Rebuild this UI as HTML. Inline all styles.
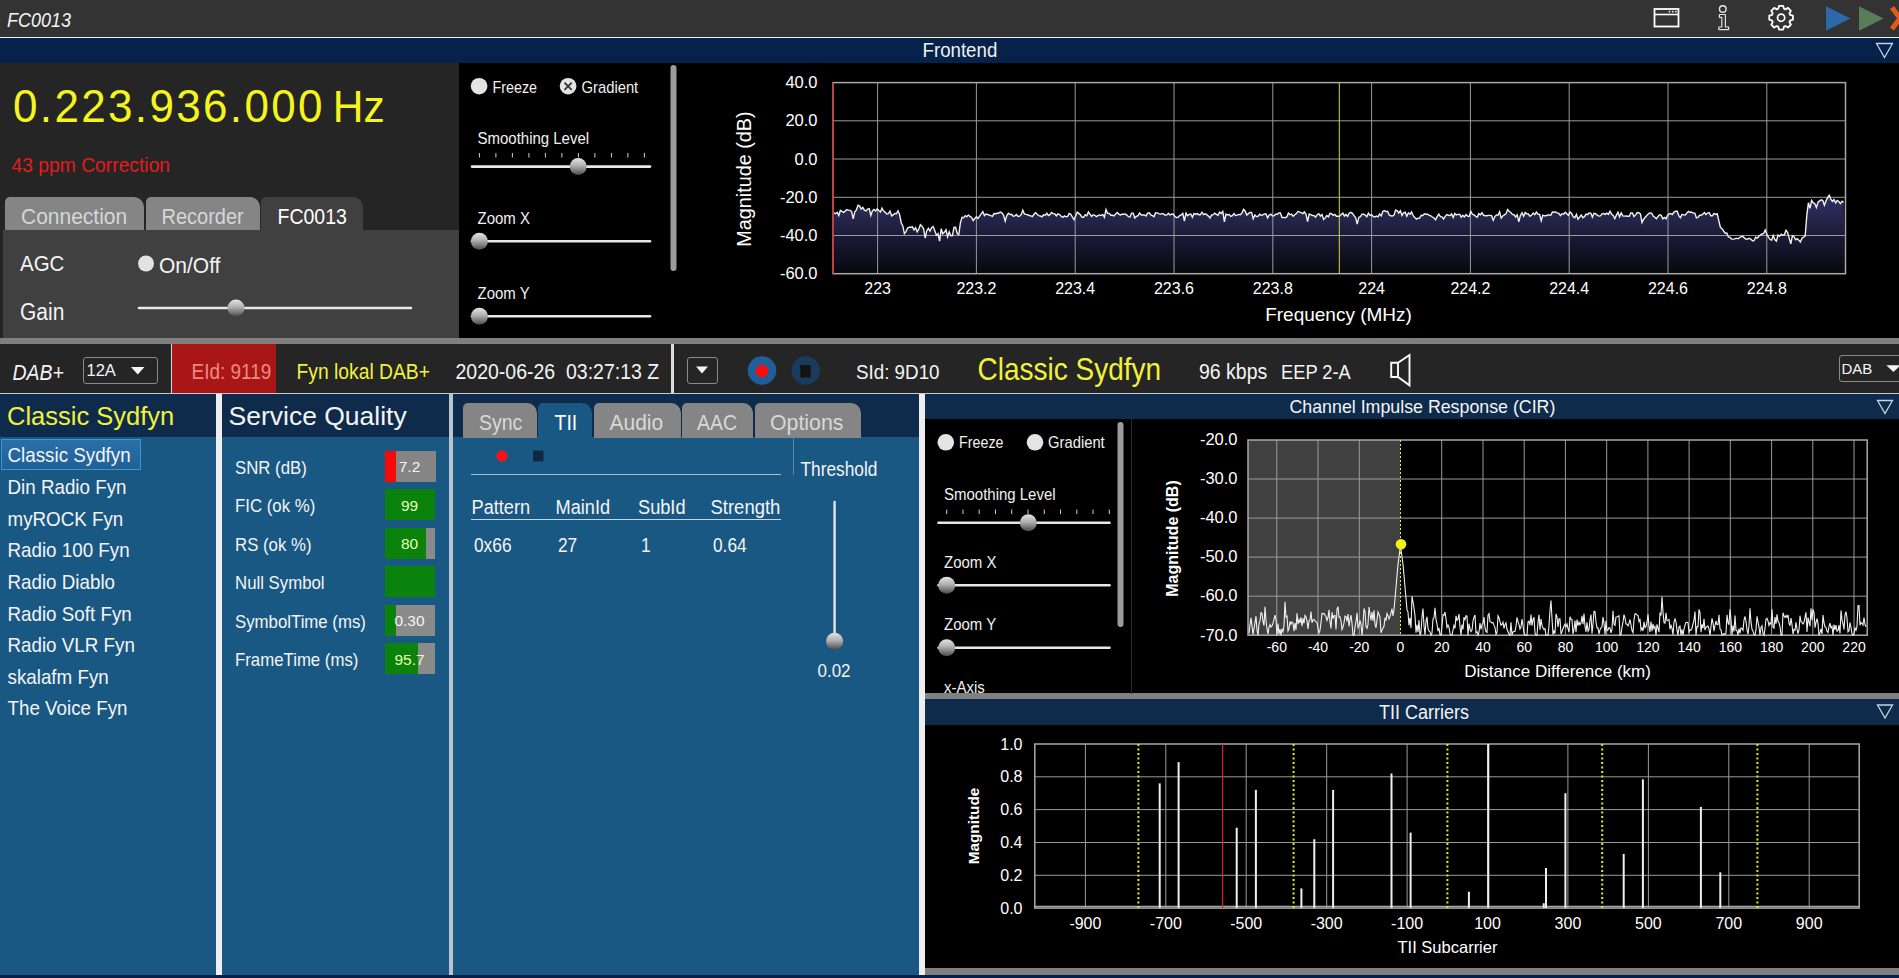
<!DOCTYPE html><html><head><meta charset="utf-8"><style>
*{margin:0;padding:0;box-sizing:border-box}
html,body{width:1899px;height:978px;overflow:hidden;background:#000;font-family:"Liberation Sans",sans-serif;color:#fff}
.a{position:absolute}
.t{position:absolute;white-space:nowrap;line-height:1}
svg{position:absolute;left:0;top:0}
</style></head><body><div class="a" style="left:0px;top:0px;width:1899px;height:37px;background:#333333;"></div>
<div class="a" style="left:0px;top:37px;width:1899px;height:1px;background:#eef2ee;"></div>
<div class="a" style="left:0px;top:38px;width:1899px;height:25px;background:#06214a;"></div>
<div class="a" style="left:0px;top:63px;width:459px;height:275px;background:#252525;"></div>
<div class="a" style="left:459px;top:63px;width:1440px;height:275px;background:#000;"></div>
<div class="a" style="left:3px;top:230px;width:456px;height:108px;background:#404040;"></div>
<div class="a" style="left:5px;top:197px;width:138.5px;height:33px;background:#858585;border-radius:5px 10px 0 0"></div>
<div class="a" style="left:145.5px;top:197px;width:114.5px;height:33px;background:#858585;border-radius:5px 10px 0 0"></div>
<div class="a" style="left:261px;top:197px;width:101.5px;height:33.5px;background:#404040;border-radius:5px 10px 0 0"></div>
<div class="a" style="left:0px;top:338px;width:1899px;height:6px;background:#808080;"></div>
<div class="a" style="left:0px;top:344px;width:1899px;height:49px;background:#252525;"></div>
<div class="a" style="left:0px;top:393px;width:1899px;height:1px;background:#c8ccd0;"></div>
<div class="a" style="left:83px;top:357px;width:75px;height:27px;border:1px solid #8a8a8a;border-radius:3px"></div>
<div class="a" style="left:172px;top:344px;width:104px;height:49px;background:#a81616;"></div>
<div class="a" style="left:171px;top:344px;width:1px;height:49px;background:#d8d8d8;"></div>
<div class="a" style="left:671px;top:344px;width:3px;height:49px;background:#dcdcdc;"></div>
<div class="a" style="left:687px;top:357px;width:31px;height:27px;border:1px solid #8a8a8a;border-radius:3px"></div>
<div class="a" style="left:1839px;top:355px;width:80px;height:27px;border:1px solid #8a8a8a;border-radius:3px"></div>
<div class="a" style="left:0px;top:394px;width:216px;height:584px;background:#1a5884;"></div>
<div class="a" style="left:0px;top:394px;width:216px;height:43px;background:#0f2b4c;"></div>
<div class="a" style="left:216px;top:394px;width:6px;height:581px;background:#eeeeee;"></div>
<div class="a" style="left:222px;top:394px;width:227px;height:584px;background:#1a5884;"></div>
<div class="a" style="left:222px;top:394px;width:227px;height:43px;background:#0f2b4c;"></div>
<div class="a" style="left:449px;top:394px;width:4px;height:581px;background:#b8c4d0;"></div>
<div class="a" style="left:453px;top:394px;width:466px;height:584px;background:#1a5884;"></div>
<div class="a" style="left:453px;top:394px;width:466px;height:43px;background:#0f2b4c;"></div>
<div class="a" style="left:919px;top:394px;width:6px;height:581px;background:#eeeeee;"></div>
<div class="a" style="left:0px;top:975px;width:1899px;height:3px;background:#062048;"></div>
<div class="a" style="left:1px;top:439px;width:140px;height:31px;border:1px solid #3f95cc;background:linear-gradient(#2a70a8,#1f6097)"></div>
<div class="a" style="left:384.5px;top:450.8px;width:11px;height:31px;background:#f80808;"></div>
<div class="a" style="left:395.5px;top:450.8px;width:40px;height:31px;background:#858585;"></div>
<div class="a" style="left:384.5px;top:489.3px;width:50px;height:31px;background:#0b820b;"></div>
<div class="a" style="left:384.5px;top:527.8px;width:41px;height:31px;background:#0b820b;"></div>
<div class="a" style="left:425.5px;top:527.8px;width:9px;height:31px;background:#8a8a8a;"></div>
<div class="a" style="left:384.5px;top:566.3px;width:50px;height:31px;background:#0b820b;"></div>
<div class="a" style="left:384.5px;top:604.8px;width:11px;height:31px;background:#0b820b;"></div>
<div class="a" style="left:395.5px;top:604.8px;width:39px;height:31px;background:#8a8a8a;"></div>
<div class="a" style="left:384.5px;top:643.3px;width:33px;height:31px;background:#0b820b;"></div>
<div class="a" style="left:417.5px;top:643.3px;width:17px;height:31px;background:#8a8a8a;"></div>
<div class="a" style="left:463px;top:402.5px;width:74px;height:35.0px;background:#858585;border-radius:5px 10px 0 0"></div>
<div class="a" style="left:538px;top:402.5px;width:54px;height:35.0px;background:#1a5884;border-radius:5px 10px 0 0"></div>
<div class="a" style="left:593.5px;top:402.5px;width:87.0px;height:35.0px;background:#858585;border-radius:5px 10px 0 0"></div>
<div class="a" style="left:681.5px;top:402.5px;width:71.5px;height:35.0px;background:#858585;border-radius:5px 10px 0 0"></div>
<div class="a" style="left:754.5px;top:402.5px;width:106.0px;height:35.0px;background:#858585;border-radius:5px 10px 0 0"></div>
<div class="a" style="left:471px;top:474px;width:310px;height:1px;background:#a8bccc;"></div>
<div class="a" style="left:793px;top:437px;width:1px;height:38px;background:#5a86a8;"></div>
<div class="a" style="left:471px;top:519px;width:310px;height:1px;background:#c8d4e0;"></div>
<div class="a" style="left:925px;top:394px;width:974px;height:25px;background:#0f2b4c;"></div>
<div class="a" style="left:925px;top:419px;width:974px;height:275px;background:#000;"></div>
<div class="a" style="left:925px;top:693px;width:974px;height:5.5px;background:#808080;"></div>
<div class="a" style="left:925px;top:693px;width:974px;height:5.5px;background:#808080;"></div>
<div class="a" style="left:1131px;top:419px;width:1px;height:275px;background:#2a2a2a;"></div>
<div class="a" style="left:925px;top:698.5px;width:974px;height:26px;background:#0f2b4c;"></div>
<div class="a" style="left:925px;top:724.5px;width:974px;height:243.5px;background:#000;"></div>
<div class="a" style="left:925px;top:968px;width:974px;height:7px;background:#808080;"></div><svg width="1899" height="978" viewBox="0 0 1899 978" font-family="Liberation Sans, sans-serif"><text transform="translate(7,26.5) scale(1,1.12)" font-size="18" fill="#f4f4f4" style="font-style:italic">FC0013</text>
<rect x="1654.5" y="9" width="24" height="17.5" fill="none" stroke="#fff" stroke-width="1.8"/>
<line x1="1654.5" y1="14.5" x2="1678.5" y2="14.5" stroke="#fff" stroke-width="1.6"/>
<circle cx="1669.5" cy="11.6" r="0.9" fill="#fff"/>
<circle cx="1672.8" cy="11.6" r="0.9" fill="#fff"/>
<circle cx="1676" cy="11.6" r="0.9" fill="#fff"/>
<circle cx="1722.8" cy="9" r="3.3" fill="none" stroke="#e8e8e8" stroke-width="1.4"/>
<path d="M1719.4 14.5 H1725.4 V27 H1728.6 V29.6 H1718.8 V27 H1721.8 V17.3 H1719.4 Z" fill="none" stroke="#e0e0e0" stroke-width="1.2" stroke-linejoin="round"/>
<path d="M1790.05 14.83 L1792.93 15.67 L1792.93 19.73 L1790.05 20.57 L1789.46 22.00 L1790.90 24.63 L1788.03 27.50 L1785.40 26.06 L1783.97 26.65 L1783.13 29.53 L1779.07 29.53 L1778.23 26.65 L1776.80 26.06 L1774.17 27.50 L1771.30 24.63 L1772.74 22.00 L1772.15 20.57 L1769.27 19.73 L1769.27 15.67 L1772.15 14.83 L1772.74 13.40 L1771.30 10.77 L1774.17 7.90 L1776.80 9.34 L1778.23 8.75 L1779.07 5.87 L1783.13 5.87 L1783.97 8.75 L1785.40 9.34 L1788.03 7.90 L1790.90 10.77 L1789.46 13.40Z" fill="none" stroke="#fff" stroke-width="1.8" stroke-linejoin="round"/>
<circle cx="1781.1" cy="17.7" r="3.6" fill="none" stroke="#fff" stroke-width="1.7"/>
<path d="M1826 6.3 L1850.5 18.5 L1826 30.7Z" fill="#2b69a8"/>
<path d="M1859 6.3 L1883.5 18.5 L1859 30.7Z" fill="#567f59"/>
<path d="M1892 7.5 L1908 29 M1908 7.5 L1892 29" stroke="#e05a1c" stroke-width="5"/>
<text transform="translate(922.5,56.5) scale(1,1.12)" font-size="18.7" fill="#f0f0f0" style="">Frontend</text>
<path d="M1876.5 43.5 L1892.5 43.5 L1884.5 57.5Z" fill="none" stroke="#c8d4e0" stroke-width="1.3" stroke-linejoin="miter"/>
<text transform="translate(13,122.3) scale(1,1.06)" font-size="44" fill="#f5f51e" style="letter-spacing:2.35px">0.223.936.000<tspan dx="8" font-size="42.5" style="letter-spacing:0">Hz</tspan></text>
<text transform="translate(11.5,172) scale(1,1.05)" font-size="19.3" fill="#e41b1b" style="">43 ppm Correction</text>
<text transform="translate(21,223.6) scale(1,1.04)" font-size="21" fill="#d6d6d6" style="">Connection</text>
<text transform="translate(161.5,223.6) scale(1,1.12)" font-size="20" fill="#d6d6d6" style="">Recorder</text>
<text transform="translate(277.5,223.6) scale(1,1.12)" font-size="19.5" fill="#ffffff" style="">FC0013</text>
<text transform="translate(20,271.3) scale(1,1.12)" font-size="20.5" fill="#f4f4f4" style="">AGC</text>
<circle cx="146" cy="263.5" r="8" fill="#e2e2e2"/>
<text transform="translate(159,273.3) scale(1,1.04)" font-size="21" fill="#f4f4f4" style="">On/Off</text>
<text transform="translate(20,320.3) scale(1,1.12)" font-size="21" fill="#f4f4f4" style="">Gain</text>
<defs><linearGradient id="kn" x1="0" y1="0" x2="0" y2="1"><stop offset="0" stop-color="#e4e4e4"/><stop offset="0.45" stop-color="#b0b0b0"/><stop offset="1" stop-color="#4a4a4a"/></linearGradient><linearGradient id="fe" x1="0" y1="0" x2="0" y2="1"><stop offset="0" stop-color="#30306a"/><stop offset="0.25" stop-color="#27274f"/><stop offset="0.55" stop-color="#191935"/><stop offset="1" stop-color="#08080f"/></linearGradient></defs>
<line x1="139" y1="308" x2="411" y2="308" stroke="#e8e8e8" stroke-width="2.6" stroke-linecap="round"/>
<circle cx="236" cy="308" r="8.5" fill="url(#kn)"/>
<circle cx="479.1" cy="86.2" r="8.3" fill="#e4e4e4"/>
<text transform="translate(492.5,92.5) scale(1,1.12)" font-size="14.3" fill="#f0f0f0" style="">Freeze</text>
<circle cx="568.1" cy="86.2" r="8.3" fill="#e4e4e4"/>
<path d="M564.5 82.60000000000001 L571.7 89.8 M571.7 82.60000000000001 L564.5 89.8" stroke="#333" stroke-width="1.8"/>
<text transform="translate(581.5,92.5) scale(1,1.12)" font-size="14.8" fill="#f0f0f0" style="">Gradient</text>
<text transform="translate(477.5,143.5) scale(1,1.12)" font-size="15" fill="#f0f0f0" style="">Smoothing Level</text>
<line x1="479.4" y1="153" x2="479.4" y2="157.5" stroke="#cfcfcf" stroke-width="1"/>
<line x1="495.9" y1="153" x2="495.9" y2="157.5" stroke="#cfcfcf" stroke-width="1"/>
<line x1="512.4" y1="153" x2="512.4" y2="157.5" stroke="#cfcfcf" stroke-width="1"/>
<line x1="528.9" y1="153" x2="528.9" y2="157.5" stroke="#cfcfcf" stroke-width="1"/>
<line x1="545.4" y1="153" x2="545.4" y2="157.5" stroke="#cfcfcf" stroke-width="1"/>
<line x1="561.9" y1="153" x2="561.9" y2="157.5" stroke="#cfcfcf" stroke-width="1"/>
<line x1="578.4" y1="153" x2="578.4" y2="157.5" stroke="#cfcfcf" stroke-width="1"/>
<line x1="594.9" y1="153" x2="594.9" y2="157.5" stroke="#cfcfcf" stroke-width="1"/>
<line x1="611.4" y1="153" x2="611.4" y2="157.5" stroke="#cfcfcf" stroke-width="1"/>
<line x1="627.9" y1="153" x2="627.9" y2="157.5" stroke="#cfcfcf" stroke-width="1"/>
<line x1="644.4" y1="153" x2="644.4" y2="157.5" stroke="#cfcfcf" stroke-width="1"/>
<line x1="472" y1="166.6" x2="650" y2="166.6" stroke="#e8e8e8" stroke-width="2.6" stroke-linecap="round"/>
<circle cx="578.2" cy="166.6" r="8.5" fill="url(#kn)"/>
<text transform="translate(477.5,223.5) scale(1,1.12)" font-size="15" fill="#f0f0f0" style="">Zoom X</text>
<line x1="472" y1="241.3" x2="650" y2="241.3" stroke="#e8e8e8" stroke-width="2.6" stroke-linecap="round"/>
<circle cx="479.4" cy="241.3" r="8.5" fill="url(#kn)"/>
<text transform="translate(477.5,298.6) scale(1,1.12)" font-size="15" fill="#f0f0f0" style="">Zoom Y</text>
<line x1="472" y1="316.3" x2="650" y2="316.3" stroke="#e8e8e8" stroke-width="2.6" stroke-linecap="round"/>
<circle cx="479.4" cy="316.3" r="8.5" fill="url(#kn)"/>
<rect x="670.5" y="65" width="6" height="206" rx="3" fill="#9c9c9c"/>
<path d="M834,273.7 L834.0 212.8 L835.6 213.7 L837.2 212.3 L838.8 215.5 L840.4 210.3 L842.0 211.4 L843.6 212.3 L845.2 211.1 L846.8 209.6 L848.4 210.1 L850.0 210.3 L851.6 211.5 L853.2 218.9 L854.8 211.8 L856.4 210.0 L858.0 205.3 L859.6 206.1 L861.2 209.1 L862.8 207.4 L864.4 210.2 L866.0 210.9 L867.6 209.1 L869.2 208.6 L870.8 215.5 L872.4 210.8 L874.0 209.4 L875.6 210.9 L877.2 208.8 L878.8 210.5 L880.4 212.0 L882.0 208.2 L883.6 211.0 L885.2 212.3 L886.8 214.0 L888.4 213.6 L890.0 211.1 L891.6 215.9 L893.2 214.9 L894.8 213.4 L896.4 213.8 L898.0 210.8 L899.6 214.6 L901.2 222.7 L902.8 225.9 L904.4 233.6 L906.0 231.6 L907.6 228.0 L909.2 227.3 L910.8 227.3 L912.4 226.9 L914.0 230.0 L915.6 227.7 L917.2 231.8 L918.8 229.0 L920.4 224.7 L922.0 226.1 L923.6 228.8 L925.2 238.1 L926.8 230.7 L928.4 228.3 L930.0 231.1 L931.6 227.8 L933.2 226.6 L934.8 230.8 L936.4 235.2 L938.0 233.7 L939.6 241.1 L941.2 228.8 L942.8 233.7 L944.4 232.3 L946.0 229.8 L947.6 236.9 L949.2 231.9 L950.8 235.8 L952.4 235.6 L954.0 227.5 L955.6 227.3 L957.2 233.5 L958.8 234.5 L960.4 222.8 L962.0 217.4 L963.6 217.8 L965.2 215.7 L966.8 216.8 L968.4 214.9 L970.0 216.4 L971.6 217.4 L973.2 220.6 L974.8 218.5 L976.4 216.7 L978.0 218.4 L979.6 216.1 L981.2 213.9 L982.8 211.6 L984.4 215.6 L986.0 214.0 L987.6 214.5 L989.2 215.1 L990.8 215.7 L992.4 216.3 L994.0 213.5 L995.6 213.7 L997.2 213.3 L998.8 213.0 L1000.4 212.0 L1002.0 213.1 L1003.6 215.2 L1005.2 221.1 L1006.8 215.6 L1008.4 213.3 L1010.0 214.5 L1011.6 214.3 L1013.2 216.2 L1014.8 215.9 L1016.4 214.5 L1018.0 216.4 L1019.6 216.2 L1021.2 214.7 L1022.8 210.2 L1024.4 214.0 L1026.0 214.4 L1027.6 214.7 L1029.2 215.5 L1030.8 215.8 L1032.4 216.6 L1034.0 214.3 L1035.6 212.8 L1037.2 214.3 L1038.8 215.7 L1040.4 216.0 L1042.0 216.8 L1043.6 214.9 L1045.2 215.3 L1046.8 213.1 L1048.4 215.5 L1050.0 214.6 L1051.6 212.5 L1053.2 213.6 L1054.8 214.0 L1056.4 215.8 L1058.0 213.8 L1059.6 214.5 L1061.2 216.2 L1062.8 217.4 L1064.4 215.9 L1066.0 216.8 L1067.6 216.4 L1069.2 213.4 L1070.8 214.3 L1072.4 217.0 L1074.0 219.7 L1075.6 215.9 L1077.2 212.2 L1078.8 213.4 L1080.4 214.8 L1082.0 217.3 L1083.6 217.3 L1085.2 214.8 L1086.8 215.8 L1088.4 212.0 L1090.0 214.2 L1091.6 216.4 L1093.2 214.7 L1094.8 215.3 L1096.4 216.7 L1098.0 215.6 L1099.6 214.9 L1101.2 215.5 L1102.8 214.5 L1104.4 217.3 L1106.0 209.5 L1107.6 213.3 L1109.2 213.4 L1110.8 215.3 L1112.4 215.3 L1114.0 216.0 L1115.6 213.9 L1117.2 212.4 L1118.8 214.1 L1120.4 214.9 L1122.0 214.3 L1123.6 214.3 L1125.2 213.9 L1126.8 215.1 L1128.4 216.7 L1130.0 216.9 L1131.6 213.1 L1133.2 213.1 L1134.8 218.0 L1136.4 216.4 L1138.0 215.7 L1139.6 213.0 L1141.2 215.0 L1142.8 215.0 L1144.4 215.0 L1146.0 216.1 L1147.6 213.1 L1149.2 212.7 L1150.8 215.0 L1152.4 215.6 L1154.0 216.6 L1155.6 212.8 L1157.2 212.9 L1158.8 213.6 L1160.4 214.1 L1162.0 213.6 L1163.6 213.9 L1165.2 215.3 L1166.8 214.9 L1168.4 213.2 L1170.0 214.9 L1171.6 214.2 L1173.2 213.9 L1174.8 216.2 L1176.4 217.5 L1178.0 217.3 L1179.6 215.6 L1181.2 214.9 L1182.8 213.3 L1184.4 221.1 L1186.0 213.2 L1187.6 215.7 L1189.2 214.4 L1190.8 214.0 L1192.4 217.3 L1194.0 213.5 L1195.6 214.4 L1197.2 213.6 L1198.8 214.7 L1200.4 214.7 L1202.0 212.2 L1203.6 214.7 L1205.2 213.9 L1206.8 214.7 L1208.4 216.1 L1210.0 218.0 L1211.6 215.0 L1213.2 214.7 L1214.8 213.1 L1216.4 214.3 L1218.0 215.2 L1219.6 212.1 L1221.2 213.5 L1222.8 211.5 L1224.4 221.9 L1226.0 214.1 L1227.6 215.0 L1229.2 214.6 L1230.8 216.4 L1232.4 215.7 L1234.0 213.6 L1235.6 215.5 L1237.2 215.1 L1238.8 214.4 L1240.4 214.7 L1242.0 212.9 L1243.6 209.3 L1245.2 211.2 L1246.8 215.0 L1248.4 213.6 L1250.0 212.5 L1251.6 212.4 L1253.2 218.8 L1254.8 215.0 L1256.4 216.5 L1258.0 216.4 L1259.6 214.2 L1261.2 215.4 L1262.8 214.9 L1264.4 214.0 L1266.0 214.0 L1267.6 217.8 L1269.2 215.0 L1270.8 214.2 L1272.4 215.8 L1274.0 215.9 L1275.6 214.2 L1277.2 214.2 L1278.8 213.0 L1280.4 212.9 L1282.0 217.6 L1283.6 217.4 L1285.2 217.7 L1286.8 217.0 L1288.4 213.0 L1290.0 214.8 L1291.6 214.2 L1293.2 216.2 L1294.8 214.8 L1296.4 213.6 L1298.0 211.4 L1299.6 212.1 L1301.2 212.7 L1302.8 213.6 L1304.4 211.9 L1306.0 214.3 L1307.6 221.7 L1309.2 214.0 L1310.8 214.6 L1312.4 215.5 L1314.0 215.6 L1315.6 217.1 L1317.2 214.7 L1318.8 213.7 L1320.4 216.1 L1322.0 214.6 L1323.6 219.4 L1325.2 217.9 L1326.8 215.5 L1328.4 216.9 L1330.0 213.4 L1331.6 213.7 L1333.2 215.3 L1334.8 214.3 L1336.4 216.2 L1338.0 216.1 L1339.6 216.2 L1341.2 214.4 L1342.8 213.1 L1344.4 216.1 L1346.0 214.4 L1347.6 216.5 L1349.2 213.2 L1350.8 212.4 L1352.4 213.3 L1354.0 215.7 L1355.6 217.6 L1357.2 224.1 L1358.8 217.4 L1360.4 216.6 L1362.0 214.1 L1363.6 214.2 L1365.2 215.1 L1366.8 216.7 L1368.4 213.2 L1370.0 215.4 L1371.6 214.6 L1373.2 216.4 L1374.8 217.0 L1376.4 216.0 L1378.0 216.8 L1379.6 213.9 L1381.2 215.9 L1382.8 211.4 L1384.4 210.6 L1386.0 211.6 L1387.6 211.2 L1389.2 214.9 L1390.8 215.8 L1392.4 216.1 L1394.0 215.1 L1395.6 210.0 L1397.2 210.9 L1398.8 213.0 L1400.4 210.8 L1402.0 215.4 L1403.6 212.9 L1405.2 212.2 L1406.8 216.3 L1408.4 212.8 L1410.0 214.2 L1411.6 212.0 L1413.2 215.7 L1414.8 217.5 L1416.4 219.2 L1418.0 218.2 L1419.6 218.0 L1421.2 215.3 L1422.8 215.5 L1424.4 213.8 L1426.0 214.2 L1427.6 214.1 L1429.2 215.4 L1430.8 215.8 L1432.4 217.0 L1434.0 218.0 L1435.6 219.7 L1437.2 216.7 L1438.8 214.1 L1440.4 216.6 L1442.0 216.8 L1443.6 219.0 L1445.2 216.3 L1446.8 214.5 L1448.4 215.3 L1450.0 215.6 L1451.6 213.9 L1453.2 217.4 L1454.8 213.5 L1456.4 214.9 L1458.0 214.4 L1459.6 214.2 L1461.2 217.2 L1462.8 215.2 L1464.4 216.9 L1466.0 214.5 L1467.6 216.1 L1469.2 216.4 L1470.8 211.3 L1472.4 214.3 L1474.0 214.9 L1475.6 216.3 L1477.2 217.3 L1478.8 213.6 L1480.4 214.8 L1482.0 212.8 L1483.6 215.3 L1485.2 215.7 L1486.8 215.8 L1488.4 215.4 L1490.0 215.4 L1491.6 215.7 L1493.2 220.4 L1494.8 216.6 L1496.4 214.9 L1498.0 215.2 L1499.6 211.9 L1501.2 218.2 L1502.8 215.9 L1504.4 214.9 L1506.0 213.9 L1507.6 209.6 L1509.2 211.2 L1510.8 212.5 L1512.4 214.4 L1514.0 214.7 L1515.6 217.0 L1517.2 214.8 L1518.8 221.9 L1520.4 215.4 L1522.0 212.7 L1523.6 216.3 L1525.2 212.4 L1526.8 213.8 L1528.4 214.0 L1530.0 216.3 L1531.6 215.1 L1533.2 213.1 L1534.8 214.7 L1536.4 212.1 L1538.0 214.3 L1539.6 214.4 L1541.2 220.7 L1542.8 215.1 L1544.4 215.8 L1546.0 215.8 L1547.6 214.9 L1549.2 215.0 L1550.8 215.2 L1552.4 212.0 L1554.0 212.3 L1555.6 211.9 L1557.2 212.8 L1558.8 213.4 L1560.4 215.6 L1562.0 213.7 L1563.6 214.2 L1565.2 212.2 L1566.8 213.8 L1568.4 215.3 L1570.0 211.9 L1571.6 213.4 L1573.2 216.7 L1574.8 217.7 L1576.4 214.4 L1578.0 219.2 L1579.6 217.1 L1581.2 215.0 L1582.8 217.7 L1584.4 216.7 L1586.0 214.1 L1587.6 214.6 L1589.2 213.0 L1590.8 213.1 L1592.4 217.2 L1594.0 213.3 L1595.6 213.7 L1597.2 215.2 L1598.8 216.1 L1600.4 215.9 L1602.0 213.9 L1603.6 213.6 L1605.2 214.4 L1606.8 213.2 L1608.4 214.4 L1610.0 211.2 L1611.6 214.2 L1613.2 215.5 L1614.8 218.7 L1616.4 215.1 L1618.0 212.2 L1619.6 216.7 L1621.2 212.9 L1622.8 215.9 L1624.4 216.1 L1626.0 215.9 L1627.6 216.3 L1629.2 216.3 L1630.8 213.0 L1632.4 212.9 L1634.0 216.5 L1635.6 214.9 L1637.2 212.5 L1638.8 212.7 L1640.4 213.8 L1642.0 222.5 L1643.6 219.2 L1645.2 217.2 L1646.8 215.6 L1648.4 213.8 L1650.0 212.9 L1651.6 213.1 L1653.2 216.0 L1654.8 217.2 L1656.4 218.6 L1658.0 216.4 L1659.6 214.7 L1661.2 215.3 L1662.8 218.8 L1664.4 217.5 L1666.0 218.8 L1667.6 215.1 L1669.2 213.9 L1670.8 213.5 L1672.4 214.5 L1674.0 212.1 L1675.6 211.3 L1677.2 211.2 L1678.8 215.6 L1680.4 217.7 L1682.0 214.4 L1683.6 214.9 L1685.2 215.0 L1686.8 213.1 L1688.4 211.4 L1690.0 212.2 L1691.6 212.2 L1693.2 213.1 L1694.8 213.1 L1696.4 217.8 L1698.0 217.3 L1699.6 215.3 L1701.2 215.3 L1702.8 214.2 L1704.4 212.6 L1706.0 214.5 L1707.6 213.0 L1709.2 212.5 L1710.8 215.7 L1712.4 215.7 L1714.0 213.4 L1715.6 214.5 L1717.2 213.8 L1718.8 220.7 L1720.4 227.4 L1722.0 228.7 L1723.6 231.0 L1725.2 233.3 L1726.8 233.0 L1728.4 236.9 L1730.0 237.2 L1731.6 239.1 L1733.2 239.1 L1734.8 238.9 L1736.4 238.2 L1738.0 238.8 L1739.6 237.5 L1741.2 236.6 L1742.8 236.2 L1744.4 237.9 L1746.0 239.2 L1747.6 239.0 L1749.2 238.3 L1750.8 239.0 L1752.4 240.8 L1754.0 240.7 L1755.6 237.3 L1757.2 238.2 L1758.8 236.2 L1760.4 235.1 L1762.0 234.0 L1763.6 233.5 L1765.2 230.1 L1766.8 234.1 L1768.4 237.2 L1770.0 239.3 L1771.6 240.3 L1773.2 235.5 L1774.8 239.6 L1776.4 241.1 L1778.0 235.0 L1779.6 236.3 L1781.2 234.2 L1782.8 235.2 L1784.4 234.6 L1786.0 230.2 L1787.6 232.6 L1789.2 238.1 L1790.8 243.8 L1792.4 235.6 L1794.0 236.7 L1795.6 239.8 L1797.2 238.7 L1798.8 240.2 L1800.4 241.9 L1802.0 238.2 L1803.6 237.1 L1805.2 235.9 L1806.8 215.3 L1808.4 202.8 L1810.0 208.4 L1811.6 200.4 L1813.2 202.7 L1814.8 203.7 L1816.4 207.4 L1818.0 202.2 L1819.6 200.9 L1821.2 199.8 L1822.8 200.5 L1824.4 205.2 L1826.0 200.9 L1827.6 197.7 L1829.2 195.3 L1830.8 199.1 L1832.4 201.3 L1834.0 199.5 L1835.6 202.8 L1837.2 200.5 L1838.8 201.5 L1840.4 203.6 L1842.0 201.2 L1843.6 202.4 L1845.0,273.7Z" fill="url(#fe)"/>
<line x1="833" y1="120.8" x2="1845.5" y2="120.8" stroke="#9a9a9a" stroke-width="1"/>
<line x1="833" y1="159.0" x2="1845.5" y2="159.0" stroke="#9a9a9a" stroke-width="1"/>
<line x1="833" y1="197.3" x2="1845.5" y2="197.3" stroke="#9a9a9a" stroke-width="1"/>
<line x1="833" y1="235.5" x2="1845.5" y2="235.5" stroke="#9a9a9a" stroke-width="1"/>
<line x1="877.6" y1="82.6" x2="877.6" y2="273.7" stroke="#9a9a9a" stroke-width="1"/>
<line x1="976.4" y1="82.6" x2="976.4" y2="273.7" stroke="#9a9a9a" stroke-width="1"/>
<line x1="1075.2" y1="82.6" x2="1075.2" y2="273.7" stroke="#9a9a9a" stroke-width="1"/>
<line x1="1174.0" y1="82.6" x2="1174.0" y2="273.7" stroke="#9a9a9a" stroke-width="1"/>
<line x1="1272.8" y1="82.6" x2="1272.8" y2="273.7" stroke="#9a9a9a" stroke-width="1"/>
<line x1="1371.6" y1="82.6" x2="1371.6" y2="273.7" stroke="#9a9a9a" stroke-width="1"/>
<line x1="1470.4" y1="82.6" x2="1470.4" y2="273.7" stroke="#9a9a9a" stroke-width="1"/>
<line x1="1569.2" y1="82.6" x2="1569.2" y2="273.7" stroke="#9a9a9a" stroke-width="1"/>
<line x1="1668.0" y1="82.6" x2="1668.0" y2="273.7" stroke="#9a9a9a" stroke-width="1"/>
<line x1="1766.8" y1="82.6" x2="1766.8" y2="273.7" stroke="#9a9a9a" stroke-width="1"/>
<rect x="833" y="82.6" width="1012.5" height="191.1" fill="none" stroke="#a8a8a8" stroke-width="1.5"/>
<line x1="833" y1="82.6" x2="833" y2="273.7" stroke="#d03030" stroke-width="1.5"/>
<polyline points="834.0,212.8 835.6,213.7 837.2,212.3 838.8,215.5 840.4,210.3 842.0,211.4 843.6,212.3 845.2,211.1 846.8,209.6 848.4,210.1 850.0,210.3 851.6,211.5 853.2,218.9 854.8,211.8 856.4,210.0 858.0,205.3 859.6,206.1 861.2,209.1 862.8,207.4 864.4,210.2 866.0,210.9 867.6,209.1 869.2,208.6 870.8,215.5 872.4,210.8 874.0,209.4 875.6,210.9 877.2,208.8 878.8,210.5 880.4,212.0 882.0,208.2 883.6,211.0 885.2,212.3 886.8,214.0 888.4,213.6 890.0,211.1 891.6,215.9 893.2,214.9 894.8,213.4 896.4,213.8 898.0,210.8 899.6,214.6 901.2,222.7 902.8,225.9 904.4,233.6 906.0,231.6 907.6,228.0 909.2,227.3 910.8,227.3 912.4,226.9 914.0,230.0 915.6,227.7 917.2,231.8 918.8,229.0 920.4,224.7 922.0,226.1 923.6,228.8 925.2,238.1 926.8,230.7 928.4,228.3 930.0,231.1 931.6,227.8 933.2,226.6 934.8,230.8 936.4,235.2 938.0,233.7 939.6,241.1 941.2,228.8 942.8,233.7 944.4,232.3 946.0,229.8 947.6,236.9 949.2,231.9 950.8,235.8 952.4,235.6 954.0,227.5 955.6,227.3 957.2,233.5 958.8,234.5 960.4,222.8 962.0,217.4 963.6,217.8 965.2,215.7 966.8,216.8 968.4,214.9 970.0,216.4 971.6,217.4 973.2,220.6 974.8,218.5 976.4,216.7 978.0,218.4 979.6,216.1 981.2,213.9 982.8,211.6 984.4,215.6 986.0,214.0 987.6,214.5 989.2,215.1 990.8,215.7 992.4,216.3 994.0,213.5 995.6,213.7 997.2,213.3 998.8,213.0 1000.4,212.0 1002.0,213.1 1003.6,215.2 1005.2,221.1 1006.8,215.6 1008.4,213.3 1010.0,214.5 1011.6,214.3 1013.2,216.2 1014.8,215.9 1016.4,214.5 1018.0,216.4 1019.6,216.2 1021.2,214.7 1022.8,210.2 1024.4,214.0 1026.0,214.4 1027.6,214.7 1029.2,215.5 1030.8,215.8 1032.4,216.6 1034.0,214.3 1035.6,212.8 1037.2,214.3 1038.8,215.7 1040.4,216.0 1042.0,216.8 1043.6,214.9 1045.2,215.3 1046.8,213.1 1048.4,215.5 1050.0,214.6 1051.6,212.5 1053.2,213.6 1054.8,214.0 1056.4,215.8 1058.0,213.8 1059.6,214.5 1061.2,216.2 1062.8,217.4 1064.4,215.9 1066.0,216.8 1067.6,216.4 1069.2,213.4 1070.8,214.3 1072.4,217.0 1074.0,219.7 1075.6,215.9 1077.2,212.2 1078.8,213.4 1080.4,214.8 1082.0,217.3 1083.6,217.3 1085.2,214.8 1086.8,215.8 1088.4,212.0 1090.0,214.2 1091.6,216.4 1093.2,214.7 1094.8,215.3 1096.4,216.7 1098.0,215.6 1099.6,214.9 1101.2,215.5 1102.8,214.5 1104.4,217.3 1106.0,209.5 1107.6,213.3 1109.2,213.4 1110.8,215.3 1112.4,215.3 1114.0,216.0 1115.6,213.9 1117.2,212.4 1118.8,214.1 1120.4,214.9 1122.0,214.3 1123.6,214.3 1125.2,213.9 1126.8,215.1 1128.4,216.7 1130.0,216.9 1131.6,213.1 1133.2,213.1 1134.8,218.0 1136.4,216.4 1138.0,215.7 1139.6,213.0 1141.2,215.0 1142.8,215.0 1144.4,215.0 1146.0,216.1 1147.6,213.1 1149.2,212.7 1150.8,215.0 1152.4,215.6 1154.0,216.6 1155.6,212.8 1157.2,212.9 1158.8,213.6 1160.4,214.1 1162.0,213.6 1163.6,213.9 1165.2,215.3 1166.8,214.9 1168.4,213.2 1170.0,214.9 1171.6,214.2 1173.2,213.9 1174.8,216.2 1176.4,217.5 1178.0,217.3 1179.6,215.6 1181.2,214.9 1182.8,213.3 1184.4,221.1 1186.0,213.2 1187.6,215.7 1189.2,214.4 1190.8,214.0 1192.4,217.3 1194.0,213.5 1195.6,214.4 1197.2,213.6 1198.8,214.7 1200.4,214.7 1202.0,212.2 1203.6,214.7 1205.2,213.9 1206.8,214.7 1208.4,216.1 1210.0,218.0 1211.6,215.0 1213.2,214.7 1214.8,213.1 1216.4,214.3 1218.0,215.2 1219.6,212.1 1221.2,213.5 1222.8,211.5 1224.4,221.9 1226.0,214.1 1227.6,215.0 1229.2,214.6 1230.8,216.4 1232.4,215.7 1234.0,213.6 1235.6,215.5 1237.2,215.1 1238.8,214.4 1240.4,214.7 1242.0,212.9 1243.6,209.3 1245.2,211.2 1246.8,215.0 1248.4,213.6 1250.0,212.5 1251.6,212.4 1253.2,218.8 1254.8,215.0 1256.4,216.5 1258.0,216.4 1259.6,214.2 1261.2,215.4 1262.8,214.9 1264.4,214.0 1266.0,214.0 1267.6,217.8 1269.2,215.0 1270.8,214.2 1272.4,215.8 1274.0,215.9 1275.6,214.2 1277.2,214.2 1278.8,213.0 1280.4,212.9 1282.0,217.6 1283.6,217.4 1285.2,217.7 1286.8,217.0 1288.4,213.0 1290.0,214.8 1291.6,214.2 1293.2,216.2 1294.8,214.8 1296.4,213.6 1298.0,211.4 1299.6,212.1 1301.2,212.7 1302.8,213.6 1304.4,211.9 1306.0,214.3 1307.6,221.7 1309.2,214.0 1310.8,214.6 1312.4,215.5 1314.0,215.6 1315.6,217.1 1317.2,214.7 1318.8,213.7 1320.4,216.1 1322.0,214.6 1323.6,219.4 1325.2,217.9 1326.8,215.5 1328.4,216.9 1330.0,213.4 1331.6,213.7 1333.2,215.3 1334.8,214.3 1336.4,216.2 1338.0,216.1 1339.6,216.2 1341.2,214.4 1342.8,213.1 1344.4,216.1 1346.0,214.4 1347.6,216.5 1349.2,213.2 1350.8,212.4 1352.4,213.3 1354.0,215.7 1355.6,217.6 1357.2,224.1 1358.8,217.4 1360.4,216.6 1362.0,214.1 1363.6,214.2 1365.2,215.1 1366.8,216.7 1368.4,213.2 1370.0,215.4 1371.6,214.6 1373.2,216.4 1374.8,217.0 1376.4,216.0 1378.0,216.8 1379.6,213.9 1381.2,215.9 1382.8,211.4 1384.4,210.6 1386.0,211.6 1387.6,211.2 1389.2,214.9 1390.8,215.8 1392.4,216.1 1394.0,215.1 1395.6,210.0 1397.2,210.9 1398.8,213.0 1400.4,210.8 1402.0,215.4 1403.6,212.9 1405.2,212.2 1406.8,216.3 1408.4,212.8 1410.0,214.2 1411.6,212.0 1413.2,215.7 1414.8,217.5 1416.4,219.2 1418.0,218.2 1419.6,218.0 1421.2,215.3 1422.8,215.5 1424.4,213.8 1426.0,214.2 1427.6,214.1 1429.2,215.4 1430.8,215.8 1432.4,217.0 1434.0,218.0 1435.6,219.7 1437.2,216.7 1438.8,214.1 1440.4,216.6 1442.0,216.8 1443.6,219.0 1445.2,216.3 1446.8,214.5 1448.4,215.3 1450.0,215.6 1451.6,213.9 1453.2,217.4 1454.8,213.5 1456.4,214.9 1458.0,214.4 1459.6,214.2 1461.2,217.2 1462.8,215.2 1464.4,216.9 1466.0,214.5 1467.6,216.1 1469.2,216.4 1470.8,211.3 1472.4,214.3 1474.0,214.9 1475.6,216.3 1477.2,217.3 1478.8,213.6 1480.4,214.8 1482.0,212.8 1483.6,215.3 1485.2,215.7 1486.8,215.8 1488.4,215.4 1490.0,215.4 1491.6,215.7 1493.2,220.4 1494.8,216.6 1496.4,214.9 1498.0,215.2 1499.6,211.9 1501.2,218.2 1502.8,215.9 1504.4,214.9 1506.0,213.9 1507.6,209.6 1509.2,211.2 1510.8,212.5 1512.4,214.4 1514.0,214.7 1515.6,217.0 1517.2,214.8 1518.8,221.9 1520.4,215.4 1522.0,212.7 1523.6,216.3 1525.2,212.4 1526.8,213.8 1528.4,214.0 1530.0,216.3 1531.6,215.1 1533.2,213.1 1534.8,214.7 1536.4,212.1 1538.0,214.3 1539.6,214.4 1541.2,220.7 1542.8,215.1 1544.4,215.8 1546.0,215.8 1547.6,214.9 1549.2,215.0 1550.8,215.2 1552.4,212.0 1554.0,212.3 1555.6,211.9 1557.2,212.8 1558.8,213.4 1560.4,215.6 1562.0,213.7 1563.6,214.2 1565.2,212.2 1566.8,213.8 1568.4,215.3 1570.0,211.9 1571.6,213.4 1573.2,216.7 1574.8,217.7 1576.4,214.4 1578.0,219.2 1579.6,217.1 1581.2,215.0 1582.8,217.7 1584.4,216.7 1586.0,214.1 1587.6,214.6 1589.2,213.0 1590.8,213.1 1592.4,217.2 1594.0,213.3 1595.6,213.7 1597.2,215.2 1598.8,216.1 1600.4,215.9 1602.0,213.9 1603.6,213.6 1605.2,214.4 1606.8,213.2 1608.4,214.4 1610.0,211.2 1611.6,214.2 1613.2,215.5 1614.8,218.7 1616.4,215.1 1618.0,212.2 1619.6,216.7 1621.2,212.9 1622.8,215.9 1624.4,216.1 1626.0,215.9 1627.6,216.3 1629.2,216.3 1630.8,213.0 1632.4,212.9 1634.0,216.5 1635.6,214.9 1637.2,212.5 1638.8,212.7 1640.4,213.8 1642.0,222.5 1643.6,219.2 1645.2,217.2 1646.8,215.6 1648.4,213.8 1650.0,212.9 1651.6,213.1 1653.2,216.0 1654.8,217.2 1656.4,218.6 1658.0,216.4 1659.6,214.7 1661.2,215.3 1662.8,218.8 1664.4,217.5 1666.0,218.8 1667.6,215.1 1669.2,213.9 1670.8,213.5 1672.4,214.5 1674.0,212.1 1675.6,211.3 1677.2,211.2 1678.8,215.6 1680.4,217.7 1682.0,214.4 1683.6,214.9 1685.2,215.0 1686.8,213.1 1688.4,211.4 1690.0,212.2 1691.6,212.2 1693.2,213.1 1694.8,213.1 1696.4,217.8 1698.0,217.3 1699.6,215.3 1701.2,215.3 1702.8,214.2 1704.4,212.6 1706.0,214.5 1707.6,213.0 1709.2,212.5 1710.8,215.7 1712.4,215.7 1714.0,213.4 1715.6,214.5 1717.2,213.8 1718.8,220.7 1720.4,227.4 1722.0,228.7 1723.6,231.0 1725.2,233.3 1726.8,233.0 1728.4,236.9 1730.0,237.2 1731.6,239.1 1733.2,239.1 1734.8,238.9 1736.4,238.2 1738.0,238.8 1739.6,237.5 1741.2,236.6 1742.8,236.2 1744.4,237.9 1746.0,239.2 1747.6,239.0 1749.2,238.3 1750.8,239.0 1752.4,240.8 1754.0,240.7 1755.6,237.3 1757.2,238.2 1758.8,236.2 1760.4,235.1 1762.0,234.0 1763.6,233.5 1765.2,230.1 1766.8,234.1 1768.4,237.2 1770.0,239.3 1771.6,240.3 1773.2,235.5 1774.8,239.6 1776.4,241.1 1778.0,235.0 1779.6,236.3 1781.2,234.2 1782.8,235.2 1784.4,234.6 1786.0,230.2 1787.6,232.6 1789.2,238.1 1790.8,243.8 1792.4,235.6 1794.0,236.7 1795.6,239.8 1797.2,238.7 1798.8,240.2 1800.4,241.9 1802.0,238.2 1803.6,237.1 1805.2,235.9 1806.8,215.3 1808.4,202.8 1810.0,208.4 1811.6,200.4 1813.2,202.7 1814.8,203.7 1816.4,207.4 1818.0,202.2 1819.6,200.9 1821.2,199.8 1822.8,200.5 1824.4,205.2 1826.0,200.9 1827.6,197.7 1829.2,195.3 1830.8,199.1 1832.4,201.3 1834.0,199.5 1835.6,202.8 1837.2,200.5 1838.8,201.5 1840.4,203.6 1842.0,201.2 1843.6,202.4" fill="none" stroke="#f0f0f0" stroke-width="1.4"/>
<line x1="1339.3" y1="82.6" x2="1339.3" y2="273.7" stroke="#d8d830" stroke-width="1"/>
<text x="817.5" y="88.1" font-size="16.5" text-anchor="end" fill="#fff" >40.0</text>
<text x="817.5" y="126.32" font-size="16.5" text-anchor="end" fill="#fff" >20.0</text>
<text x="817.5" y="164.54" font-size="16.5" text-anchor="end" fill="#fff" >0.0</text>
<text x="817.5" y="202.76" font-size="16.5" text-anchor="end" fill="#fff" >-20.0</text>
<text x="817.5" y="240.98" font-size="16.5" text-anchor="end" fill="#fff" >-40.0</text>
<text x="817.5" y="279.2" font-size="16.5" text-anchor="end" fill="#fff" >-60.0</text>
<text x="877.6" y="294.2" font-size="16" text-anchor="middle" fill="#fff" >223</text>
<text x="976.4" y="294.2" font-size="16" text-anchor="middle" fill="#fff" >223.2</text>
<text x="1075.2" y="294.2" font-size="16" text-anchor="middle" fill="#fff" >223.4</text>
<text x="1174.0" y="294.2" font-size="16" text-anchor="middle" fill="#fff" >223.6</text>
<text x="1272.8" y="294.2" font-size="16" text-anchor="middle" fill="#fff" >223.8</text>
<text x="1371.6" y="294.2" font-size="16" text-anchor="middle" fill="#fff" >224</text>
<text x="1470.4" y="294.2" font-size="16" text-anchor="middle" fill="#fff" >224.2</text>
<text x="1569.2" y="294.2" font-size="16" text-anchor="middle" fill="#fff" >224.4</text>
<text x="1668.0" y="294.2" font-size="16" text-anchor="middle" fill="#fff" >224.6</text>
<text x="1766.8" y="294.2" font-size="16" text-anchor="middle" fill="#fff" >224.8</text>
<text x="1338.5" y="321" font-size="19" text-anchor="middle" fill="#fff" >Frequency (MHz)</text>
<text transform="translate(751,179) rotate(-90)" font-size="19.8" text-anchor="middle" fill="#fff">Magnitude (dB)</text>
<text transform="translate(12.5,380) scale(1,1.12)" font-size="19.5" fill="#f4f4f4" style="font-style:italic">DAB+</text>
<text x="86.5" y="376" font-size="16.5" fill="#f4f4f4" style="">12A</text>
<path d="M131 367 L144.5 367 L137.75 374.5Z" fill="#f4f4f4"/>
<text transform="translate(191.5,379.4) scale(1,1.12)" font-size="19" fill="#f08a80" style="">EId: 9119</text>
<text transform="translate(296.5,379.4) scale(1,1.12)" font-size="19.3" fill="#f2f23a" style="">Fyn lokal DAB+</text>
<text transform="translate(455.5,379.4) scale(1,1.12)" font-size="19.5" fill="#f4f4f4" style="">2020-06-26&#160;&#160;03:27:13 Z</text>
<path d="M696 366.5 L708 366.5 L702 373.5Z" fill="#f4f4f4"/>
<circle cx="762" cy="370.5" r="14.3" fill="#1f5e99"/><circle cx="762" cy="371" r="6.2" fill="#ff0a0a"/>
<circle cx="805.8" cy="370.5" r="14.3" fill="#1b3b5c"/><rect x="800.3" y="365" width="10.5" height="12.5" fill="#141414"/>
<text transform="translate(856,379.4) scale(1,1.12)" font-size="18.8" fill="#f4f4f4" style="">SId: 9D10</text>
<text transform="translate(977.5,380) scale(1,1.12)" font-size="28" fill="#f2f23a" style="">Classic Sydfyn</text>
<text transform="translate(1199,379.4) scale(1,1.12)" font-size="19.5" fill="#f4f4f4" style="">96 kbps</text>
<text transform="translate(1281,379.4) scale(1,1.12)" font-size="18.3" fill="#f4f4f4" style="">EEP 2-A</text>
<path d="M1391.2 362.8 H1398 L1409.5 355 V385.3 L1398 377 H1391.2 Z M1398 362.8 V377" fill="none" stroke="#fafafa" stroke-width="1.9" stroke-linejoin="miter"/>
<text x="1841.5" y="374" font-size="15" fill="#f4f4f4" style="">DAB</text>
<path d="M1886.3 365.3 L1900.5 365.3 L1893.4 372 Z" fill="#f4f4f4"/>
<text x="7" y="425.2" font-size="25.5" fill="#f2f23a" style="">Classic Sydfyn</text>
<text transform="translate(7.5,462.4) scale(1,1.12)" font-size="18.8" fill="#f4f4f4" style="">Classic Sydfyn</text>
<text transform="translate(7.5,494.03) scale(1,1.12)" font-size="18.8" fill="#f4f4f4" style="">Din Radio Fyn</text>
<text transform="translate(7.5,525.66) scale(1,1.12)" font-size="18.8" fill="#f4f4f4" style="">myROCK Fyn</text>
<text transform="translate(7.5,557.29) scale(1,1.12)" font-size="18.8" fill="#f4f4f4" style="">Radio 100 Fyn</text>
<text transform="translate(7.5,588.92) scale(1,1.12)" font-size="18.8" fill="#f4f4f4" style="">Radio Diablo</text>
<text transform="translate(7.5,620.55) scale(1,1.12)" font-size="18.8" fill="#f4f4f4" style="">Radio Soft Fyn</text>
<text transform="translate(7.5,652.18) scale(1,1.12)" font-size="18.8" fill="#f4f4f4" style="">Radio VLR Fyn</text>
<text transform="translate(7.5,683.81) scale(1,1.12)" font-size="18.8" fill="#f4f4f4" style="">skalafm Fyn</text>
<text transform="translate(7.5,715.4399999999999) scale(1,1.12)" font-size="18.8" fill="#f4f4f4" style="">The Voice Fyn</text>
<text x="228.5" y="425.2" font-size="26.5" fill="#f4f4f4" style="">Service Quality</text>
<text transform="translate(235,473.8) scale(1,1.12)" font-size="16.8" fill="#f4f4f4" style="">SNR (dB)</text>
<text x="409.5" y="472.2" font-size="15.5" text-anchor="middle" fill="#f4f4f4" >7.2</text>
<text transform="translate(235,512.3) scale(1,1.12)" font-size="16.8" fill="#f4f4f4" style="">FIC (ok %)</text>
<text x="409.5" y="510.7" font-size="15.5" text-anchor="middle" fill="#e8ffb0" >99</text>
<text transform="translate(235,550.8) scale(1,1.12)" font-size="16.8" fill="#f4f4f4" style="">RS (ok %)</text>
<text x="409.5" y="549.2" font-size="15.5" text-anchor="middle" fill="#e8ffb0" >80</text>
<text transform="translate(235,589.3) scale(1,1.12)" font-size="16.8" fill="#f4f4f4" style="">Null Symbol</text>
<text transform="translate(235,627.8) scale(1,1.12)" font-size="16.8" fill="#f4f4f4" style="">SymbolTime (ms)</text>
<text x="409.5" y="626.2" font-size="15.5" text-anchor="middle" fill="#f4f4f4" >0.30</text>
<text transform="translate(235,666.3) scale(1,1.12)" font-size="16.8" fill="#f4f4f4" style="">FrameTime (ms)</text>
<text x="409.5" y="664.7" font-size="15.5" text-anchor="middle" fill="#e8ffb0" >95.7</text>
<text transform="translate(479,430) scale(1,1.12)" font-size="19.5" fill="#d8d8d8" style="">Sync</text>
<text transform="translate(554.5,430) scale(1,1.12)" font-size="19.5" fill="#ffffff" style="">TII</text>
<text transform="translate(609.5,430) scale(1,1.04)" font-size="21" fill="#d8d8d8" style="">Audio</text>
<text transform="translate(697,430) scale(1,1.12)" font-size="19.5" fill="#d8d8d8" style="">AAC</text>
<text transform="translate(770,430) scale(1,1.04)" font-size="21.3" fill="#d8d8d8" style="">Options</text>
<circle cx="502" cy="456" r="5.5" fill="#ff1010"/>
<rect x="533" y="450.5" width="10.5" height="11" fill="#10283f"/>
<text transform="translate(800.5,475.6) scale(1,1.12)" font-size="17.3" fill="#f4f4f4" style="">Threshold</text>
<text transform="translate(471.5,514) scale(1,1.12)" font-size="18.2" fill="#f4f4f4" style="">Pattern</text>
<text transform="translate(555.5,514) scale(1,1.12)" font-size="18.2" fill="#f4f4f4" style="">MainId</text>
<text transform="translate(638,514) scale(1,1.12)" font-size="18.2" fill="#f4f4f4" style="">SubId</text>
<text transform="translate(710.5,514) scale(1,1.12)" font-size="18.5" fill="#f4f4f4" style="">Strength</text>
<text transform="translate(474,551.8) scale(1,1.12)" font-size="17.3" fill="#f4f4f4" style="">0x66</text>
<text transform="translate(558,551.8) scale(1,1.12)" font-size="17.3" fill="#f4f4f4" style="">27</text>
<text transform="translate(641,551.8) scale(1,1.12)" font-size="17.3" fill="#f4f4f4" style="">1</text>
<text transform="translate(713,551.8) scale(1,1.12)" font-size="17.3" fill="#f4f4f4" style="">0.64</text>
<line x1="834.6" y1="502" x2="834.6" y2="640" stroke="#e0e0e0" stroke-width="2.5" stroke-linecap="round"/>
<circle cx="834.6" cy="641.3" r="8.5" fill="url(#kn)"/>
<text transform="translate(817.5,676.8) scale(1,1.12)" font-size="17" fill="#f4f4f4" style="">0.02</text>
<text transform="translate(1289.5,412.8) scale(1,1.04)" font-size="17.8" fill="#f4f4f4" style="">Channel Impulse Response (CIR)</text>
<path d="M1877.5 400.5 L1892.5 400.5 L1885.0 413.5Z" fill="none" stroke="#c8d4e0" stroke-width="1.3" stroke-linejoin="miter"/>
<circle cx="945.8" cy="442.3" r="8.3" fill="#e4e4e4"/>
<text transform="translate(959,448.3) scale(1,1.12)" font-size="14.3" fill="#f0f0f0" style="">Freeze</text>
<circle cx="1035" cy="442.3" r="8.3" fill="#e4e4e4"/>
<text transform="translate(1048,448.3) scale(1,1.12)" font-size="14.8" fill="#f0f0f0" style="">Gradient</text>
<text transform="translate(944,499.5) scale(1,1.12)" font-size="15" fill="#f0f0f0" style="">Smoothing Level</text>
<line x1="946.7" y1="509.5" x2="946.7" y2="514" stroke="#cfcfcf" stroke-width="1"/>
<line x1="963.0" y1="509.5" x2="963.0" y2="514" stroke="#cfcfcf" stroke-width="1"/>
<line x1="979.2" y1="509.5" x2="979.2" y2="514" stroke="#cfcfcf" stroke-width="1"/>
<line x1="995.5" y1="509.5" x2="995.5" y2="514" stroke="#cfcfcf" stroke-width="1"/>
<line x1="1011.7" y1="509.5" x2="1011.7" y2="514" stroke="#cfcfcf" stroke-width="1"/>
<line x1="1028.0" y1="509.5" x2="1028.0" y2="514" stroke="#cfcfcf" stroke-width="1"/>
<line x1="1044.3" y1="509.5" x2="1044.3" y2="514" stroke="#cfcfcf" stroke-width="1"/>
<line x1="1060.5" y1="509.5" x2="1060.5" y2="514" stroke="#cfcfcf" stroke-width="1"/>
<line x1="1076.8" y1="509.5" x2="1076.8" y2="514" stroke="#cfcfcf" stroke-width="1"/>
<line x1="1093.0" y1="509.5" x2="1093.0" y2="514" stroke="#cfcfcf" stroke-width="1"/>
<line x1="1109.3" y1="509.5" x2="1109.3" y2="514" stroke="#cfcfcf" stroke-width="1"/>
<line x1="938.5" y1="522.7" x2="1109.5" y2="522.7" stroke="#e8e8e8" stroke-width="2.6" stroke-linecap="round"/>
<circle cx="1028.3" cy="522.7" r="8.5" fill="url(#kn)"/>
<text transform="translate(944,567.8) scale(1,1.12)" font-size="15" fill="#f0f0f0" style="">Zoom X</text>
<line x1="938.5" y1="585.3" x2="1109.5" y2="585.3" stroke="#e8e8e8" stroke-width="2.6" stroke-linecap="round"/>
<circle cx="946.7" cy="585.3" r="8.5" fill="url(#kn)"/>
<text transform="translate(944,629.6) scale(1,1.12)" font-size="15" fill="#f0f0f0" style="">Zoom Y</text>
<line x1="938.5" y1="647.7" x2="1109.5" y2="647.7" stroke="#e8e8e8" stroke-width="2.6" stroke-linecap="round"/>
<circle cx="946.7" cy="647.7" r="8.5" fill="url(#kn)"/>
<text transform="translate(944,693) scale(1,1.12)" font-size="15" fill="#f0f0f0" style="">x-Axis</text>
<rect x="1117.5" y="422" width="6" height="205" rx="3" fill="#9c9c9c"/>
<rect x="1248" y="440" width="152.5" height="195.20000000000005" fill="#404040"/>
<line x1="1248" y1="479.0" x2="1867.2" y2="479.0" stroke="#9a9a9a" stroke-width="1"/>
<line x1="1248" y1="518.1" x2="1867.2" y2="518.1" stroke="#9a9a9a" stroke-width="1"/>
<line x1="1248" y1="557.1" x2="1867.2" y2="557.1" stroke="#9a9a9a" stroke-width="1"/>
<line x1="1248" y1="596.2" x2="1867.2" y2="596.2" stroke="#9a9a9a" stroke-width="1"/>
<line x1="1276.8" y1="440" x2="1276.8" y2="635.2" stroke="#9a9a9a" stroke-width="1"/>
<line x1="1318.0" y1="440" x2="1318.0" y2="635.2" stroke="#9a9a9a" stroke-width="1"/>
<line x1="1359.3" y1="440" x2="1359.3" y2="635.2" stroke="#9a9a9a" stroke-width="1"/>
<line x1="1441.7" y1="440" x2="1441.7" y2="635.2" stroke="#9a9a9a" stroke-width="1"/>
<line x1="1483.0" y1="440" x2="1483.0" y2="635.2" stroke="#9a9a9a" stroke-width="1"/>
<line x1="1524.2" y1="440" x2="1524.2" y2="635.2" stroke="#9a9a9a" stroke-width="1"/>
<line x1="1565.4" y1="440" x2="1565.4" y2="635.2" stroke="#9a9a9a" stroke-width="1"/>
<line x1="1606.7" y1="440" x2="1606.7" y2="635.2" stroke="#9a9a9a" stroke-width="1"/>
<line x1="1647.9" y1="440" x2="1647.9" y2="635.2" stroke="#9a9a9a" stroke-width="1"/>
<line x1="1689.1" y1="440" x2="1689.1" y2="635.2" stroke="#9a9a9a" stroke-width="1"/>
<line x1="1730.3" y1="440" x2="1730.3" y2="635.2" stroke="#9a9a9a" stroke-width="1"/>
<line x1="1771.6" y1="440" x2="1771.6" y2="635.2" stroke="#9a9a9a" stroke-width="1"/>
<line x1="1812.8" y1="440" x2="1812.8" y2="635.2" stroke="#9a9a9a" stroke-width="1"/>
<line x1="1854.0" y1="440" x2="1854.0" y2="635.2" stroke="#9a9a9a" stroke-width="1"/>
<rect x="1248" y="440" width="619.2" height="195.20000000000005" fill="none" stroke="#a8a8a8" stroke-width="1.5"/>
<polyline points="1249.0,633.3 1250.0,625.0 1251.0,617.8 1252.0,625.9 1253.0,634.4 1254.0,628.5 1255.0,622.7 1256.0,616.2 1257.0,630.3 1258.0,635.2 1259.0,623.6 1260.0,620.9 1261.0,612.6 1262.0,613.5 1263.0,621.5 1264.0,625.5 1265.0,606.9 1266.0,620.5 1267.0,628.7 1268.0,634.1 1269.0,627.3 1270.0,624.6 1271.0,627.0 1272.0,625.9 1273.0,623.2 1274.0,619.3 1275.0,615.1 1276.0,619.8 1277.0,635.2 1278.0,623.5 1279.0,634.2 1280.0,629.2 1281.0,635.2 1282.0,628.8 1283.0,631.6 1284.0,625.6 1285.0,601.8 1286.0,617.0 1287.0,616.1 1288.0,630.9 1289.0,628.9 1290.0,621.5 1291.0,624.2 1292.0,621.9 1293.0,623.0 1294.0,631.1 1295.0,623.0 1296.0,629.8 1297.0,613.3 1298.0,624.2 1299.0,619.7 1300.0,622.9 1301.0,617.4 1302.0,626.3 1303.0,618.2 1304.0,623.3 1305.0,615.3 1306.0,617.0 1307.0,621.0 1308.0,628.9 1309.0,620.7 1310.0,620.0 1311.0,611.5 1312.0,622.7 1313.0,620.1 1314.0,619.5 1315.0,620.9 1316.0,621.9 1317.0,622.4 1318.0,628.1 1319.0,633.0 1320.0,630.4 1321.0,622.5 1322.0,613.3 1323.0,613.8 1324.0,613.5 1325.0,615.3 1326.0,616.5 1327.0,620.5 1328.0,617.8 1329.0,609.8 1330.0,621.8 1331.0,628.5 1332.0,612.2 1333.0,618.6 1334.0,615.7 1335.0,615.4 1336.0,629.4 1337.0,609.2 1338.0,606.8 1339.0,617.2 1340.0,616.7 1341.0,621.0 1342.0,629.6 1343.0,627.2 1344.0,622.9 1345.0,616.2 1346.0,616.7 1347.0,621.5 1348.0,614.0 1349.0,626.3 1350.0,619.7 1351.0,615.1 1352.0,623.4 1353.0,635.2 1354.0,635.2 1355.0,626.7 1356.0,621.7 1357.0,612.7 1358.0,627.5 1359.0,625.7 1360.0,620.4 1361.0,624.3 1362.0,635.2 1363.0,624.8 1364.0,608.5 1365.0,611.9 1366.0,626.7 1367.0,628.3 1368.0,624.4 1369.0,607.1 1370.0,614.2 1371.0,620.2 1372.0,612.1 1373.0,620.9 1374.0,610.2 1375.0,624.4 1376.0,627.8 1377.0,620.0 1378.0,612.0 1379.0,614.3 1380.0,617.2 1381.0,632.8 1382.0,630.1 1383.0,628.1 1384.0,626.4 1385.0,617.7 1386.0,620.7 1387.0,613.5 1388.0,615.6 1389.0,618.9 1390.0,616.5 1391.0,613.1 1392.0,608.6 1393.0,616.0 1394.0,609.9 1395.0,598.5 1396.0,587.2 1397.0,575.8 1398.0,564.4 1399.0,556.8 1400.0,549.2 1401.0,549.2 1402.0,556.8 1403.0,564.4 1404.0,575.8 1405.0,587.2 1406.0,598.5 1407.0,609.9 1408.0,612.0 1409.0,625.4 1410.0,617.9 1411.0,628.1 1412.0,596.2 1413.0,602.0 1414.0,608.1 1415.0,615.9 1416.0,632.7 1417.0,624.7 1418.0,632.3 1419.0,620.1 1420.0,635.2 1421.0,632.4 1422.0,616.7 1423.0,608.5 1424.0,625.8 1425.0,634.7 1426.0,621.1 1427.0,616.9 1428.0,628.6 1429.0,631.0 1430.0,631.8 1431.0,635.2 1432.0,633.2 1433.0,618.9 1434.0,617.8 1435.0,607.8 1436.0,619.4 1437.0,623.8 1438.0,631.2 1439.0,627.8 1440.0,635.0 1441.0,635.2 1442.0,625.4 1443.0,614.8 1444.0,615.3 1445.0,612.0 1446.0,618.5 1447.0,627.5 1448.0,625.1 1449.0,627.4 1450.0,633.4 1451.0,635.2 1452.0,635.2 1453.0,630.2 1454.0,625.5 1455.0,628.3 1456.0,615.9 1457.0,620.3 1458.0,619.0 1459.0,614.1 1460.0,626.7 1461.0,635.2 1462.0,624.5 1463.0,629.4 1464.0,617.1 1465.0,619.6 1466.0,615.8 1467.0,616.2 1468.0,635.2 1469.0,623.7 1470.0,629.0 1471.0,631.5 1472.0,630.1 1473.0,621.2 1474.0,617.2 1475.0,615.0 1476.0,632.9 1477.0,631.7 1478.0,635.2 1479.0,632.1 1480.0,623.0 1481.0,629.5 1482.0,624.6 1483.0,623.0 1484.0,617.0 1485.0,627.8 1486.0,631.6 1487.0,632.4 1488.0,615.1 1489.0,613.6 1490.0,621.7 1491.0,622.0 1492.0,622.9 1493.0,622.6 1494.0,625.4 1495.0,627.3 1496.0,634.4 1497.0,632.6 1498.0,615.8 1499.0,617.8 1500.0,621.8 1501.0,625.2 1502.0,624.4 1503.0,622.1 1504.0,628.3 1505.0,624.6 1506.0,622.9 1507.0,629.3 1508.0,631.8 1509.0,634.2 1510.0,635.2 1511.0,622.2 1512.0,635.2 1513.0,632.0 1514.0,631.5 1515.0,631.4 1516.0,626.3 1517.0,617.3 1518.0,621.6 1519.0,624.6 1520.0,628.9 1521.0,627.1 1522.0,619.1 1523.0,625.5 1524.0,633.0 1525.0,635.2 1526.0,635.2 1527.0,635.2 1528.0,621.8 1529.0,621.2 1530.0,625.1 1531.0,614.6 1532.0,625.7 1533.0,619.7 1534.0,617.3 1535.0,633.0 1536.0,635.2 1537.0,635.2 1538.0,622.3 1539.0,614.7 1540.0,629.8 1541.0,619.1 1542.0,625.4 1543.0,627.7 1544.0,629.6 1545.0,628.7 1546.0,635.2 1547.0,635.2 1548.0,635.2 1549.0,625.7 1550.0,610.4 1551.0,600.5 1552.0,618.6 1553.0,634.6 1554.0,631.0 1555.0,633.5 1556.0,613.8 1557.0,616.8 1558.0,627.0 1559.0,618.9 1560.0,618.9 1561.0,634.1 1562.0,631.7 1563.0,628.8 1564.0,626.0 1565.0,624.2 1566.0,626.9 1567.0,624.1 1568.0,628.6 1569.0,632.3 1570.0,616.7 1571.0,619.3 1572.0,619.7 1573.0,634.1 1574.0,629.1 1575.0,620.5 1576.0,632.3 1577.0,619.6 1578.0,625.6 1579.0,622.2 1580.0,624.7 1581.0,623.1 1582.0,615.7 1583.0,624.3 1584.0,613.6 1585.0,626.3 1586.0,631.8 1587.0,622.2 1588.0,631.3 1589.0,629.6 1590.0,620.0 1591.0,614.5 1592.0,633.6 1593.0,624.2 1594.0,611.3 1595.0,611.6 1596.0,621.8 1597.0,627.9 1598.0,627.9 1599.0,633.9 1600.0,629.7 1601.0,627.8 1602.0,626.8 1603.0,617.1 1604.0,623.6 1605.0,634.5 1606.0,620.7 1607.0,630.8 1608.0,630.0 1609.0,627.5 1610.0,628.1 1611.0,632.9 1612.0,629.3 1613.0,610.9 1614.0,624.1 1615.0,625.4 1616.0,617.0 1617.0,616.8 1618.0,616.5 1619.0,615.8 1620.0,635.2 1621.0,634.5 1622.0,627.2 1623.0,622.0 1624.0,614.6 1625.0,617.9 1626.0,624.0 1627.0,624.1 1628.0,626.0 1629.0,623.4 1630.0,619.5 1631.0,625.2 1632.0,630.6 1633.0,632.7 1634.0,619.8 1635.0,613.9 1636.0,613.9 1637.0,614.9 1638.0,615.4 1639.0,621.4 1640.0,618.9 1641.0,630.0 1642.0,628.0 1643.0,631.0 1644.0,621.8 1645.0,627.7 1646.0,626.5 1647.0,622.5 1648.0,614.4 1649.0,626.6 1650.0,631.9 1651.0,621.5 1652.0,631.3 1653.0,623.8 1654.0,628.4 1655.0,626.7 1656.0,635.2 1657.0,624.4 1658.0,628.1 1659.0,632.2 1660.0,612.7 1661.0,615.5 1662.0,596.8 1663.0,612.0 1664.0,622.7 1665.0,623.2 1666.0,612.9 1667.0,620.7 1668.0,620.1 1669.0,619.4 1670.0,629.2 1671.0,625.4 1672.0,628.4 1673.0,634.7 1674.0,622.1 1675.0,619.1 1676.0,622.2 1677.0,630.2 1678.0,635.2 1679.0,626.9 1680.0,626.1 1681.0,635.2 1682.0,629.4 1683.0,635.2 1684.0,629.2 1685.0,625.2 1686.0,622.4 1687.0,622.3 1688.0,622.6 1689.0,632.0 1690.0,629.9 1691.0,630.1 1692.0,628.2 1693.0,624.0 1694.0,620.1 1695.0,611.6 1696.0,635.2 1697.0,626.6 1698.0,626.7 1699.0,609.4 1700.0,612.8 1701.0,632.1 1702.0,624.4 1703.0,628.2 1704.0,618.9 1705.0,630.1 1706.0,627.3 1707.0,626.5 1708.0,626.0 1709.0,629.2 1710.0,635.2 1711.0,626.5 1712.0,618.3 1713.0,622.9 1714.0,631.2 1715.0,625.5 1716.0,621.0 1717.0,624.6 1718.0,624.7 1719.0,614.8 1720.0,629.1 1721.0,630.1 1722.0,635.2 1723.0,634.9 1724.0,633.5 1725.0,634.5 1726.0,633.0 1727.0,614.9 1728.0,622.6 1729.0,624.8 1730.0,609.2 1731.0,619.7 1732.0,635.1 1733.0,625.5 1734.0,631.5 1735.0,615.5 1736.0,630.2 1737.0,630.7 1738.0,635.2 1739.0,628.7 1740.0,633.2 1741.0,628.1 1742.0,628.5 1743.0,630.3 1744.0,620.0 1745.0,616.5 1746.0,621.4 1747.0,629.8 1748.0,634.0 1749.0,626.0 1750.0,608.3 1751.0,622.2 1752.0,629.3 1753.0,631.2 1754.0,634.6 1755.0,635.0 1756.0,629.7 1757.0,616.4 1758.0,621.8 1759.0,627.2 1760.0,635.2 1761.0,627.4 1762.0,625.8 1763.0,633.7 1764.0,635.2 1765.0,628.7 1766.0,619.0 1767.0,618.3 1768.0,621.0 1769.0,625.6 1770.0,622.8 1771.0,624.1 1772.0,609.2 1773.0,627.2 1774.0,628.1 1775.0,617.0 1776.0,623.8 1777.0,614.4 1778.0,621.4 1779.0,622.5 1780.0,626.5 1781.0,635.0 1782.0,635.1 1783.0,612.7 1784.0,616.0 1785.0,617.4 1786.0,615.4 1787.0,617.4 1788.0,614.9 1789.0,623.1 1790.0,625.7 1791.0,618.1 1792.0,624.8 1793.0,634.1 1794.0,629.5 1795.0,630.2 1796.0,622.3 1797.0,628.9 1798.0,633.6 1799.0,630.1 1800.0,615.7 1801.0,621.8 1802.0,622.5 1803.0,623.9 1804.0,622.3 1805.0,617.3 1806.0,612.3 1807.0,631.9 1808.0,617.6 1809.0,622.2 1810.0,626.1 1811.0,608.3 1812.0,620.1 1813.0,609.4 1814.0,612.5 1815.0,627.6 1816.0,622.3 1817.0,618.6 1818.0,623.4 1819.0,635.2 1820.0,632.7 1821.0,628.8 1822.0,633.9 1823.0,615.1 1824.0,623.0 1825.0,626.8 1826.0,627.5 1827.0,631.2 1828.0,632.4 1829.0,626.7 1830.0,623.2 1831.0,627.7 1832.0,626.4 1833.0,635.0 1834.0,624.6 1835.0,629.9 1836.0,625.0 1837.0,631.1 1838.0,630.6 1839.0,625.2 1840.0,633.4 1841.0,610.4 1842.0,619.9 1843.0,623.5 1844.0,629.4 1845.0,615.1 1846.0,611.6 1847.0,618.0 1848.0,631.9 1849.0,630.7 1850.0,622.5 1851.0,627.5 1852.0,634.0 1853.0,635.2 1854.0,634.1 1855.0,627.9 1856.0,630.3 1857.0,626.5 1858.0,605.7 1859.0,605.6 1860.0,625.3 1861.0,622.5 1862.0,623.3 1863.0,625.1 1864.0,617.5 1865.0,624.5 1866.0,626.9" fill="none" stroke="#f0f0f0" stroke-width="1.1"/>
<line x1="1400.5" y1="440" x2="1400.5" y2="635.2" stroke="#e8e830" stroke-width="1" stroke-dasharray="2,2"/>
<circle cx="1401" cy="544.3" r="5.3" fill="#f2f20a"/>
<text x="1237.5" y="445.3" font-size="16.5" text-anchor="end" fill="#fff" >-20.0</text>
<text x="1237.5" y="484.34000000000003" font-size="16.5" text-anchor="end" fill="#fff" >-30.0</text>
<text x="1237.5" y="523.38" font-size="16.5" text-anchor="end" fill="#fff" >-40.0</text>
<text x="1237.5" y="562.42" font-size="16.5" text-anchor="end" fill="#fff" >-50.0</text>
<text x="1237.5" y="601.46" font-size="16.5" text-anchor="end" fill="#fff" >-60.0</text>
<text x="1237.5" y="640.5" font-size="16.5" text-anchor="end" fill="#fff" >-70.0</text>
<text x="1276.81" y="652.3" font-size="14" text-anchor="middle" fill="#fff" >-60</text>
<text x="1318.04" y="652.3" font-size="14" text-anchor="middle" fill="#fff" >-40</text>
<text x="1359.27" y="652.3" font-size="14" text-anchor="middle" fill="#fff" >-20</text>
<text x="1400.5" y="652.3" font-size="14" text-anchor="middle" fill="#fff" >0</text>
<text x="1441.73" y="652.3" font-size="14" text-anchor="middle" fill="#fff" >20</text>
<text x="1482.96" y="652.3" font-size="14" text-anchor="middle" fill="#fff" >40</text>
<text x="1524.19" y="652.3" font-size="14" text-anchor="middle" fill="#fff" >60</text>
<text x="1565.42" y="652.3" font-size="14" text-anchor="middle" fill="#fff" >80</text>
<text x="1606.65" y="652.3" font-size="14" text-anchor="middle" fill="#fff" >100</text>
<text x="1647.88" y="652.3" font-size="14" text-anchor="middle" fill="#fff" >120</text>
<text x="1689.1100000000001" y="652.3" font-size="14" text-anchor="middle" fill="#fff" >140</text>
<text x="1730.3400000000001" y="652.3" font-size="14" text-anchor="middle" fill="#fff" >160</text>
<text x="1771.57" y="652.3" font-size="14" text-anchor="middle" fill="#fff" >180</text>
<text x="1812.8" y="652.3" font-size="14" text-anchor="middle" fill="#fff" >200</text>
<text x="1854.03" y="652.3" font-size="14" text-anchor="middle" fill="#fff" >220</text>
<text x="1557.5" y="677" font-size="17" text-anchor="middle" fill="#fff" >Distance Difference (km)</text>
<text transform="translate(1178,538.5) rotate(-90)" font-size="16" font-weight="bold" text-anchor="middle" fill="#fff">Magnitude (dB)</text>
<text transform="translate(1379,718.5) scale(1,1.12)" font-size="18" fill="#f4f4f4" style="">TII Carriers</text>
<path d="M1877.5 705 L1892.5 705 L1885.0 718Z" fill="none" stroke="#c8d4e0" stroke-width="1.3" stroke-linejoin="miter"/>
<line x1="1034.8" y1="875.3" x2="1859.2" y2="875.3" stroke="#9a9a9a" stroke-width="1"/>
<line x1="1034.8" y1="842.5" x2="1859.2" y2="842.5" stroke="#9a9a9a" stroke-width="1"/>
<line x1="1034.8" y1="809.6" x2="1859.2" y2="809.6" stroke="#9a9a9a" stroke-width="1"/>
<line x1="1034.8" y1="776.8" x2="1859.2" y2="776.8" stroke="#9a9a9a" stroke-width="1"/>
<line x1="1085.4" y1="744" x2="1085.4" y2="908.1" stroke="#9a9a9a" stroke-width="1"/>
<line x1="1165.8" y1="744" x2="1165.8" y2="908.1" stroke="#9a9a9a" stroke-width="1"/>
<line x1="1246.2" y1="744" x2="1246.2" y2="908.1" stroke="#9a9a9a" stroke-width="1"/>
<line x1="1326.7" y1="744" x2="1326.7" y2="908.1" stroke="#9a9a9a" stroke-width="1"/>
<line x1="1407.1" y1="744" x2="1407.1" y2="908.1" stroke="#9a9a9a" stroke-width="1"/>
<line x1="1487.5" y1="744" x2="1487.5" y2="908.1" stroke="#9a9a9a" stroke-width="1"/>
<line x1="1567.9" y1="744" x2="1567.9" y2="908.1" stroke="#9a9a9a" stroke-width="1"/>
<line x1="1648.4" y1="744" x2="1648.4" y2="908.1" stroke="#9a9a9a" stroke-width="1"/>
<line x1="1728.8" y1="744" x2="1728.8" y2="908.1" stroke="#9a9a9a" stroke-width="1"/>
<line x1="1809.2" y1="744" x2="1809.2" y2="908.1" stroke="#9a9a9a" stroke-width="1"/>
<rect x="1034.8" y="744" width="824.4000000000001" height="164.10000000000002" fill="none" stroke="#a8a8a8" stroke-width="1.5"/>
<line x1="1034.8" y1="906.6" x2="1859.2" y2="906.6" stroke="#a8a8a8" stroke-width="1.5"/>
<line x1="1138.4" y1="744" x2="1138.4" y2="908.1" stroke="#e8e820" stroke-width="2" stroke-dasharray="2,2.5"/>
<line x1="1293.6" y1="744" x2="1293.6" y2="908.1" stroke="#e8e820" stroke-width="2" stroke-dasharray="2,2.5"/>
<line x1="1447.4" y1="744" x2="1447.4" y2="908.1" stroke="#e8e820" stroke-width="2" stroke-dasharray="2,2.5"/>
<line x1="1602.2" y1="744" x2="1602.2" y2="908.1" stroke="#e8e820" stroke-width="2" stroke-dasharray="2,2.5"/>
<line x1="1757.4" y1="744" x2="1757.4" y2="908.1" stroke="#e8e820" stroke-width="2" stroke-dasharray="2,2.5"/>
<line x1="1222.6" y1="744" x2="1222.6" y2="908.1" stroke="#d02828" stroke-width="1.2"/>
<line x1="1159.7" y1="783.4" x2="1159.7" y2="908.1" stroke="#f0f0f0" stroke-width="2"/>
<line x1="1178.6" y1="762.1" x2="1178.6" y2="908.1" stroke="#f0f0f0" stroke-width="2"/>
<line x1="1236.7" y1="827.7" x2="1236.7" y2="908.1" stroke="#f0f0f0" stroke-width="2"/>
<line x1="1255.9" y1="789.9" x2="1255.9" y2="908.1" stroke="#f0f0f0" stroke-width="2"/>
<line x1="1301.4" y1="888.4" x2="1301.4" y2="908.1" stroke="#f0f0f0" stroke-width="2"/>
<line x1="1314.3" y1="839.2" x2="1314.3" y2="908.1" stroke="#f0f0f0" stroke-width="2"/>
<line x1="1333.1" y1="789.9" x2="1333.1" y2="908.1" stroke="#f0f0f0" stroke-width="2"/>
<line x1="1391.5" y1="773.5" x2="1391.5" y2="908.1" stroke="#f0f0f0" stroke-width="2"/>
<line x1="1410.6" y1="832.6" x2="1410.6" y2="908.1" stroke="#f0f0f0" stroke-width="2"/>
<line x1="1468.9" y1="891.7" x2="1468.9" y2="908.1" stroke="#f0f0f0" stroke-width="2"/>
<line x1="1488.3" y1="744.0" x2="1488.3" y2="908.1" stroke="#f0f0f0" stroke-width="2"/>
<line x1="1543.7" y1="903.2" x2="1543.7" y2="908.1" stroke="#f0f0f0" stroke-width="2"/>
<line x1="1546" y1="867.9" x2="1546" y2="908.1" stroke="#f0f0f0" stroke-width="2"/>
<line x1="1565.4" y1="793.2" x2="1565.4" y2="908.1" stroke="#f0f0f0" stroke-width="2"/>
<line x1="1623.7" y1="853.9" x2="1623.7" y2="908.1" stroke="#f0f0f0" stroke-width="2"/>
<line x1="1642.9" y1="779.3" x2="1642.9" y2="908.1" stroke="#f0f0f0" stroke-width="2"/>
<line x1="1700.9" y1="806.9" x2="1700.9" y2="908.1" stroke="#f0f0f0" stroke-width="2"/>
<line x1="1720.3" y1="872.3" x2="1720.3" y2="908.1" stroke="#f0f0f0" stroke-width="2"/>
<text x="1022.5" y="749.5" font-size="16" text-anchor="end" fill="#fff" >1.0</text>
<text x="1022.5" y="782.3199999999999" font-size="16" text-anchor="end" fill="#fff" >0.8</text>
<text x="1022.5" y="815.14" font-size="16" text-anchor="end" fill="#fff" >0.6</text>
<text x="1022.5" y="847.96" font-size="16" text-anchor="end" fill="#fff" >0.4</text>
<text x="1022.5" y="880.78" font-size="16" text-anchor="end" fill="#fff" >0.2</text>
<text x="1022.5" y="913.6" font-size="16" text-anchor="end" fill="#fff" >0.0</text>
<text x="1085.4" y="929" font-size="16" text-anchor="middle" fill="#fff" >-900</text>
<text x="1165.8222222222223" y="929" font-size="16" text-anchor="middle" fill="#fff" >-700</text>
<text x="1246.2444444444445" y="929" font-size="16" text-anchor="middle" fill="#fff" >-500</text>
<text x="1326.6666666666667" y="929" font-size="16" text-anchor="middle" fill="#fff" >-300</text>
<text x="1407.088888888889" y="929" font-size="16" text-anchor="middle" fill="#fff" >-100</text>
<text x="1487.5111111111112" y="929" font-size="16" text-anchor="middle" fill="#fff" >100</text>
<text x="1567.9333333333334" y="929" font-size="16" text-anchor="middle" fill="#fff" >300</text>
<text x="1648.3555555555556" y="929" font-size="16" text-anchor="middle" fill="#fff" >500</text>
<text x="1728.7777777777778" y="929" font-size="16" text-anchor="middle" fill="#fff" >700</text>
<text x="1809.2" y="929" font-size="16" text-anchor="middle" fill="#fff" >900</text>
<text x="1447.5" y="953" font-size="16.5" text-anchor="middle" fill="#fff" >TII Subcarrier</text>
<text transform="translate(979,826) rotate(-90)" font-size="15.3" font-weight="bold" text-anchor="middle" fill="#fff">Magnitude</text></svg></body></html>
